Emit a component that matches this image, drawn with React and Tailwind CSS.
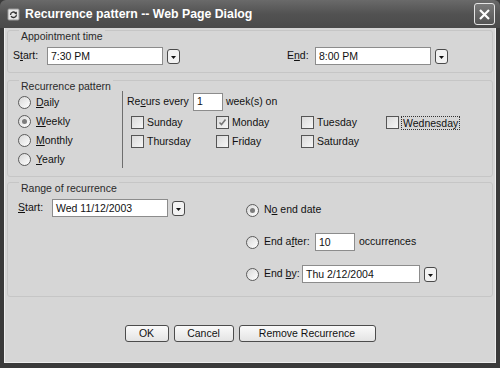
import React from "react";

function DropBtn() {
  return (
    <span className="flex h-[15px] w-[13px] shrink-0 items-center justify-center rounded-[3px] border border-[#4a4a4a] bg-[#f2f2f2]">
      <svg width="9" height="9" viewBox="0 0 9 9">
        <path d="M2 4h5l-2.5 3z" fill="#111" />
      </svg>
    </span>
  );
}

function TextBox({ value, w }) {
  return (
    <span className={`flex h-[18px] ${w} shrink-0 items-center border border-[#8c8c8c] bg-white px-[3px] leading-none text-[#111]`}>
      {value}
    </span>
  );
}

function Radio({ checked }) {
  return (
    <span className="flex h-[13px] w-[13px] shrink-0 items-center justify-center rounded-full border border-[#5c5c5c] bg-gradient-to-br from-[#d8d8d8] to-white">
      {checked && <span className="h-[5px] w-[5px] rounded-full bg-[#7c7c7c]" />}
    </span>
  );
}

function Check({ checked }) {
  return (
    <span className="flex h-[13px] w-[13px] shrink-0 items-center justify-center border border-[#555] bg-gradient-to-br from-[#dadada] to-[#f6f6f6]">
      {checked && (
        <svg width="9" height="9" viewBox="0 0 9 9">
          <path d="M1.5 4.5l2 2 4-5" stroke="#777" strokeWidth="1.6" fill="none" />
        </svg>
      )}
    </span>
  );
}

function Group({ title, className, children }) {
  return (
    <div className={`relative rounded-[3px] border border-[#c6c6c6] ${className}`}>
      <span className="absolute left-[11px] top-[-1px] bg-[#d6d6d6] px-[2px] leading-[12px] text-[#2a2a2a]">{title}</span>
      {children}
    </div>
  );
}

const days = [
  ["Sunday", false],
  ["Monday", true],
  ["Tuesday", false],
  ["Wednesday", false, true],
  ["Thursday", false],
  ["Friday", false],
  ["Saturday", false],
];

export default function App() {
  return (
    <div className="flex h-[368px] w-[500px] flex-col bg-[#3a3a3a] font-['Liberation_Sans',Arial,sans-serif] text-[10.5px] text-[#111]">
      {/* title bar */}
      <div className="flex h-[28px] shrink-0 items-center rounded-t-[6px] bg-gradient-to-b from-[#6a6a6a] via-[#525252] to-[#4a4a4a] pl-[7px] pr-[5px]">
        <svg width="13" height="13" viewBox="0 0 13 13">
          <rect x="1" y="1" width="11" height="11" rx="1" fill="#e8e8e8" stroke="#999" />
          <path d="M3.5 7a3 3 0 0 1 5.5-1.6" stroke="#333" strokeWidth="1.3" fill="none" />
          <path d="M9.8 3.4v2.6H7.2z" fill="#333" />
          <path d="M9.5 6.5a3 3 0 0 1-5.5 1.6" stroke="#333" strokeWidth="1.3" fill="none" />
        </svg>
        <span className="ml-[5px] text-[12.3px] font-bold text-white">Recurrence pattern -- Web Page Dialog</span>
        <span className="ml-auto flex h-[22px] w-[21px] items-center justify-center rounded-[3px] border border-[#e4e4e4] bg-gradient-to-b from-[#7a7a7a] to-[#555]">
          <svg width="13" height="13" viewBox="0 0 13 13">
            <path d="M2 2l9 9M11 2l-9 9" stroke="#fff" strokeWidth="2.2" />
          </svg>
        </span>
      </div>

      {/* client */}
      <div className="mx-[4px] flex h-[335px] flex-col border-x border-b border-[#ededed] bg-[#d6d6d6] px-[2px]">
        <Group title="Appointment time" className="mt-[2px] h-[43px]">
          <div className="flex items-center pl-[5px] pt-[16px]">
            <span className="w-[34px]">S<u>t</u>art:</span>
            <TextBox value="7:30 PM" w="w-[116px]" />
            <span className="ml-[4px]"><DropBtn /></span>
            <span className="ml-[107px] w-[28px]">E<u>n</u>d:</span>
            <TextBox value="8:00 PM" w="w-[116px]" />
            <span className="ml-[4px]"><DropBtn /></span>
          </div>
        </Group>

        <Group title="Recurrence pattern" className="mt-[7px] h-[97px]">
          <div className="flex">
            <div className="flex w-[114px] flex-col pl-[10px] pt-[12px]">
              {[
                ["D", "aily", false],
                ["W", "eekly", true],
                ["M", "onthly", false],
                ["Y", "early", false],
              ].map(([k, rest, on]) => (
                <div key={rest} className="flex h-[19px] items-center gap-[5px]">
                  <Radio checked={on} />
                  <span><u>{k}</u>{rest}</span>
                </div>
              ))}
            </div>
            <div className="mt-[10px] h-[77px] w-px bg-[#6e6e6e]" />
            <div className="flex flex-col pl-[4px] pt-[11px]">
              <div className="flex h-[19px] items-center">
                <span>Re<u>c</u>urs every</span>
                <span className="ml-[4px]"><TextBox value="1" w="w-[30px]" /></span>
                <span className="ml-[3px]">week(s) on</span>
              </div>
              <div className="grid grid-cols-[85px_85px_85px_85px] pl-[4px] pt-[2px]">
                {days.map(([d, on, focus]) => (
                  <div key={d} className="flex h-[19px] items-center gap-[2px]">
                    <Check checked={on} />
                    <span className={focus ? "border border-dotted border-[#333] px-[1px] leading-[12px]" : "px-[1px]"}>{d}</span>
                  </div>
                ))}
              </div>
            </div>
          </div>
        </Group>

        <Group title="Range of recurrence" className="mt-[5px] h-[115px]">
          <div className="flex">
            <div className="flex w-[238px] items-start pl-[10px] pt-[16px]">
              <span className="flex h-[18px] w-[34px] items-center"><u>S</u>tart:</span>
              <TextBox value="Wed 11/12/2003" w="w-[116px]" />
              <span className="ml-[4px] mt-[2px]"><DropBtn /></span>
            </div>
            <div className="flex flex-col gap-[12px] pt-[17px]">
              <div className="flex h-[20px] items-center gap-[5px]">
                <Radio checked />
                <span>N<u>o</u> end date</span>
              </div>
              <div className="flex h-[20px] items-center gap-[5px]">
                <Radio />
                <span className="w-[46px] shrink-0 whitespace-nowrap">End a<u>f</u>ter:</span>
                <TextBox value="10" w="w-[40px]" />
                <span className="ml-[-1px]">occurrences</span>
              </div>
              <div className="flex h-[20px] items-center">
                <Radio />
                <span className="ml-[5px] w-[38px] shrink-0 whitespace-nowrap">End <u>b</u>y:</span>
                <TextBox value="Thu 2/12/2004" w="w-[118px]" />
                <span className="ml-[4px]"><DropBtn /></span>
              </div>
            </div>
          </div>
        </Group>

        <div className="mt-[28px] flex justify-center gap-[5px]">
          {[
            ["OK", "w-[44px]"],
            ["Cancel", "w-[60px]"],
            ["Remove Recurrence", "w-[137px]"],
          ].map(([t, w]) => (
            <button key={t} className={`h-[17px] ${w} rounded-[3px] border border-[#4c4c4c] bg-gradient-to-b from-[#fafafa] to-[#e4e4e4] text-[10.5px] leading-none text-[#111]`}>
              {t}
            </button>
          ))}
        </div>
      </div>
    </div>
  );
}
